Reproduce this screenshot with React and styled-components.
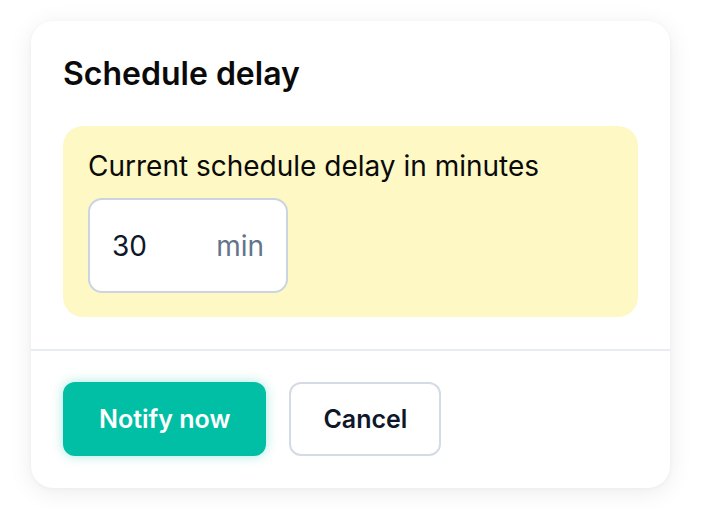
import React from 'react';
import styled, { createGlobalStyle } from 'styled-components';

const Global = createGlobalStyle`
  html, body {
    margin: 0;
    background: #ffffff;
    font-family: Inter, "Noto Sans", sans-serif;
  }
  * { box-sizing: border-box; }
`;

const Page = styled.div`
  padding: 21px 31px;
`;

const Card = styled.div`
  background: #ffffff;
  border-radius: 22px;
  box-shadow: 0 4px 24px rgba(15, 23, 42, 0.08), 0 1px 4px rgba(15, 23, 42, 0.04);
  overflow: hidden;
`;

const Body = styled.div`
  padding: 33px 32px 32px;
  display: flex;
  flex-direction: column;
  gap: 32px;
`;

const Title = styled.h2`
  margin: 0;
  font-size: 32px;
  line-height: 40px;
  font-weight: 600;
  color: #0a0a0a;
`;

const Notice = styled.div`
  background: #fef8c5;
  border-radius: 20px;
  padding: 24px 25px;
  display: flex;
  flex-direction: column;
  gap: 16px;
`;

const Label = styled.div`
  font-size: 28px;
  line-height: 32px;
  color: #0a0a0a;
`;

const Field = styled.div`
  width: 200px;
  height: 95px;
  background: #ffffff;
  border: 2px solid #cbd5e1;
  border-radius: 14px;
  display: flex;
  align-items: center;
  justify-content: space-between;
  padding: 0 22px;
  font-size: 28px;
`;

const Value = styled.span`
  color: #0f172a;
`;

const Unit = styled.span`
  color: #64748b;
`;

const Footer = styled.div`
  border-top: 2px solid #e8ecf1;
  padding: 31px 32px 32px;
  display: flex;
  gap: 23px;
`;

const Button = styled.button`
  height: 74px;
  padding: 0 ${p => (p.$primary ? '36px' : '32px')};
  border-radius: 12px;
  font-family: inherit;
  font-size: 25px;
  font-weight: 600;
  cursor: pointer;
  border: ${p => (p.$primary ? 'none' : '2px solid #d5dbe4')};
  background: ${p => (p.$primary ? '#00bfa5' : '#ffffff')};
  color: ${p => (p.$primary ? '#ffffff' : '#0f172a')};
  box-shadow: ${p => (p.$primary ? '0 0 12px rgba(0, 191, 165, 0.35)' : 'none')};
`;

export default function App() {
  return (
    <>
      <Global />
      <Page>
        <Card>
          <Body>
            <Title>Schedule delay</Title>
            <Notice>
              <Label>Current schedule delay in minutes</Label>
              <Field>
                <Value>30</Value>
                <Unit>min</Unit>
              </Field>
            </Notice>
          </Body>
          <Footer>
            <Button $primary>Notify now</Button>
            <Button>Cancel</Button>
          </Footer>
        </Card>
      </Page>
    </>
  );
}
